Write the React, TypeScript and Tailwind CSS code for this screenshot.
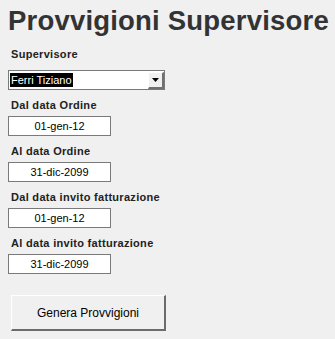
import React from "react";

const labelCls =
  "block text-[11px] font-bold leading-[13px] text-[#222] tracking-[0.3px] pl-[3px]";

function DateBox({ value }: { value: string }) {
  return (
    <div className="flex h-[20px] w-[103px] items-center justify-center border border-[#7a7a7a] bg-white text-[11px] text-black">
      {value}
    </div>
  );
}

function Field({ label, value }: { label: string; value: string }) {
  return (
    <div className="flex flex-col gap-[4px]">
      <span className={labelCls}>{label}</span>
      <DateBox value={value} />
    </div>
  );
}

export default function App() {
  return (
    <div
      className="h-[339px] w-[335px] overflow-hidden bg-[#f0f0f0] pl-[8px]"
      style={{ fontFamily: '"Liberation Sans", Arial, sans-serif' }}
    >
      <h1 className="pt-[5px] text-[27.5px] font-bold leading-[32px] text-[#333] tracking-[0.2px]">
        Provvigioni Supervisore
      </h1>

      <div className="mt-[11px] flex flex-col gap-[9px]">
        <span className={labelCls}>Supervisore</span>
        <div className="flex h-[20px] w-[157px] items-center border border-[#7a7a7a] bg-white">
          <span className="ml-[1px] bg-black px-[1px] text-[11px] leading-[14px] text-white">
            Ferri Tiziano
          </span>
          <span className="flex-1" />
          <div className="flex h-[17px] w-[16px] items-center justify-center border-b-2 border-r-2 border-l border-t border-b-[#707070] border-r-[#707070] border-l-white border-t-white bg-[#f0f0f0]">
            <svg width="7" height="4" viewBox="0 0 7 4">
              <polygon points="0,0 7,0 3.5,4" fill="#000" />
            </svg>
          </div>
        </div>
      </div>

      <div className="mt-[9px] flex flex-col gap-[9px]">
        <Field label="Dal data Ordine" value="01-gen-12" />
        <Field label="Al data Ordine" value="31-dic-2099" />
        <Field label="Dal data invito fatturazione" value="01-gen-12" />
        <Field label="Al data invito fatturazione" value="31-dic-2099" />
      </div>

      <button className="ml-[3px] mt-[21px] flex h-[36px] w-[155px] items-center justify-center border-b-2 border-r-2 border-l border-t border-b-[#6b6b6b] border-r-[#6b6b6b] border-l-white border-t-white bg-[#f0f0f0] text-[12px] text-black">
        Genera Provvigioni
      </button>
    </div>
  );
}
